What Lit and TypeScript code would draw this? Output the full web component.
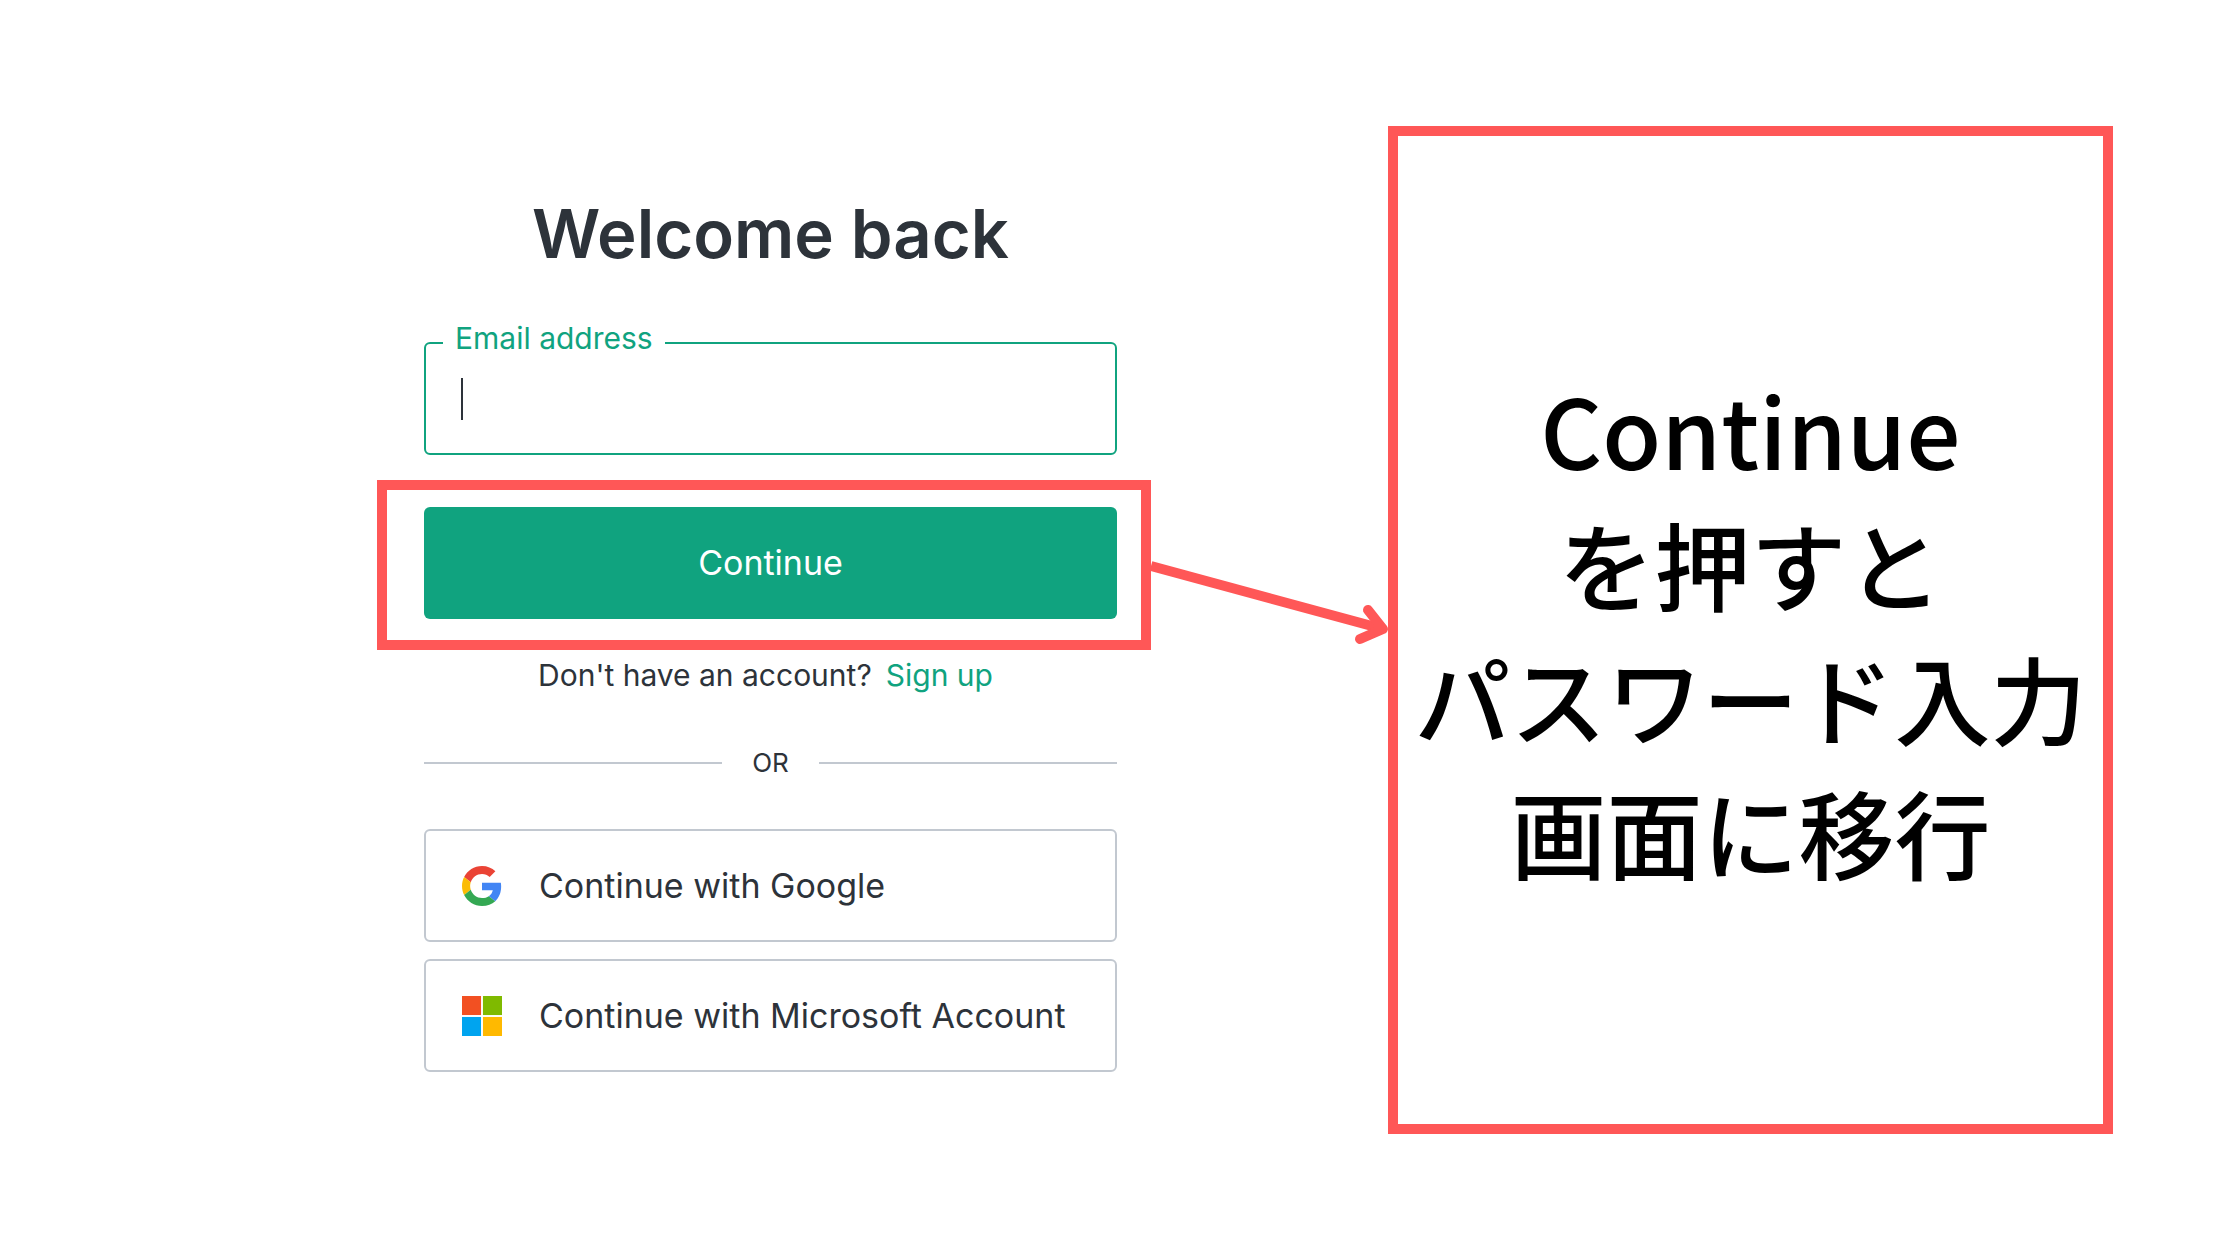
import { LitElement, html, css } from "lit";
import { customElement } from "lit/decorators.js";

@customElement("login-form")
export class LoginForm extends LitElement {
  static styles = css`
    :host {
      display: block;
      color: #2d333a;
      font-family: Inter, "Liberation Sans", sans-serif;
    }
    .form {
      display: flex;
      flex-direction: column;
      margin: 0;
    }
    .title {
      margin: 0 0 66px;
      text-align: center;
      font-size: 67px;
      line-height: 84px;
      font-weight: 600;
    }
    .field {
      position: relative;
      margin-bottom: 52px;
    }
    .label {
      position: absolute;
      left: 19px;
      top: -22px;
      padding: 0 12px;
      background: #fff;
      color: #10a37f;
      font-size: 30px;
      line-height: 36px;
    }
    .input {
      display: block;
      box-sizing: border-box;
      width: 100%;
      height: 113px;
      padding: 0 36px;
      border: 2px solid #10a37f;
      border-radius: 6px;
      background: #fff;
      color: inherit;
      font: inherit;
      font-size: 34px;
      outline: none;
    }
    .caret {
      position: absolute;
      left: 37px;
      top: 36px;
      width: 2px;
      height: 42px;
      background: #2d333a;
    }
    .submit {
      position: relative;
      margin-bottom: 36px;
    }
    .highlight {
      position: absolute;
      inset: -27px -34px -31px -47px;
      border: 10px solid #ff5757;
      pointer-events: none;
    }
    .primary {
      display: block;
      width: 100%;
      height: 112px;
      padding: 0 0 2px;
      border: 0;
      border-radius: 6px;
      background: #10a37f;
      color: #fff;
      font: inherit;
      font-size: 34px;
    }
    .signup {
      display: flex;
      justify-content: center;
      gap: 14px;
      margin: 0 10px 50px 0;
      font-size: 30px;
      line-height: 40px;
    }
    .link {
      color: #10a37f;
      text-decoration: none;
    }
    .divider {
      display: flex;
      align-items: center;
      gap: 30px;
      margin-bottom: 48px;
      font-size: 26px;
      line-height: 36px;
    }
    .rule {
      flex: 1;
      height: 2px;
      background: #c2c8d0;
    }
    .providers {
      display: flex;
      flex-direction: column;
      gap: 17px;
    }
    .provider {
      display: flex;
      align-items: center;
      gap: 37px;
      height: 113px;
      padding: 0 36px;
      border: 2px solid #c2c8d0;
      border-radius: 6px;
      background: #fff;
      color: inherit;
      font: inherit;
      font-size: 34px;
      text-align: left;
    }
    .icon {
      flex: none;
      width: 40px;
      height: 40px;
    }
  `;

  render() {
    return html`
      <form class="form" @submit=${(e: Event) => e.preventDefault()}>
        <h1 class="title">Welcome back</h1>
        <div class="field">
          <input class="input" id="email" type="email" autocomplete="email" />
          <label class="label" for="email">Email address</label>
          <span class="caret"></span>
        </div>
        <div class="submit">
          <button class="primary" type="submit">Continue</button>
          <div class="highlight"></div>
        </div>
        <p class="signup">
          <span>Don't have an account?</span>
          <a class="link" href="#signup">Sign up</a>
        </p>
        <div class="divider">
          <span class="rule"></span><span>OR</span><span class="rule"></span>
        </div>
        <div class="providers">
          <button class="provider" type="button">
            <svg class="icon" viewBox="0 0 48 48" aria-hidden="true">
              <path fill="#EA4335" d="M24 9.5c3.54 0 6.71 1.22 9.21 3.6l6.85-6.85C35.9 2.38 30.47 0 24 0 14.62 0 6.51 5.38 2.56 13.22l7.98 6.19C12.43 13.72 17.74 9.5 24 9.5z" />
              <path fill="#4285F4" d="M46.98 24.55c0-1.57-.15-3.09-.38-4.55H24v9.02h12.94c-.58 2.96-2.26 5.48-4.78 7.18l7.73 6c4.51-4.18 7.09-10.36 7.09-17.65z" />
              <path fill="#FBBC05" d="M10.53 28.59c-.48-1.45-.76-2.99-.76-4.59s.27-3.14.76-4.59l-7.98-6.19C.92 16.46 0 20.12 0 24s.92 7.54 2.56 10.78l7.97-6.19z" />
              <path fill="#34A853" d="M24 48c6.48 0 11.93-2.13 15.89-5.81l-7.73-6c-2.15 1.45-4.92 2.3-8.16 2.3-6.26 0-11.57-4.22-13.47-9.91l-7.98 6.19C6.51 42.62 14.62 48 24 48z" />
            </svg>
            <span>Continue with Google</span>
          </button>
          <button class="provider" type="button">
            <svg class="icon" viewBox="0 0 21 21" aria-hidden="true">
              <path fill="#f25022" d="M0 0h10v10H0z" />
              <path fill="#7fba00" d="M11 0h10v10H11z" />
              <path fill="#00a4ef" d="M0 11h10v10H0z" />
              <path fill="#ffb900" d="M11 11h10v10H11z" />
            </svg>
            <span>Continue with Microsoft Account</span>
          </button>
        </div>
      </form>
    `;
  }
}

@customElement("app-root")
export class AppRoot extends LitElement {
  static styles = css`
    :host {
      display: block;
      background: #fff;
    }
    .page {
      box-sizing: border-box;
      display: grid;
      grid-template-columns: 774fr 237fr 725fr;
      min-height: 100vh;
      padding: 126px 127px 126px 377px;
    }
    .form {
      padding: 66px 34px 0 47px;
    }
    .arrow {
      display: block;
      width: 100%;
      margin-top: 425px;
      overflow: visible;
    }
    .note {
      box-sizing: border-box;
      display: flex;
      align-items: center;
      justify-content: center;
      border: 10px solid #ff5757;
    }
    .text {
      margin: 0;
      color: #000;
      font-family: "Noto Sans CJK JP", sans-serif;
      font-size: 96px;
      line-height: 134px;
      font-weight: 500;
      text-align: center;
      white-space: nowrap;
    }
  `;

  render() {
    return html`
      <main class="page">
        <login-form class="form"></login-form>
        <div>
          <svg class="arrow" viewBox="0 0 237 100" fill="none" stroke="#ff5757" stroke-width="10" aria-hidden="true">
            <path d="M0 15L232 78" />
            <path d="M217 59L232 78L209 88" stroke-linecap="round" stroke-linejoin="round" />
          </svg>
        </div>
        <aside class="note">
          <p class="text" lang="ja">Continue<br />を押すと<br />パスワード入力<br />画面に移行</p>
        </aside>
      </main>
    `;
  }
}
